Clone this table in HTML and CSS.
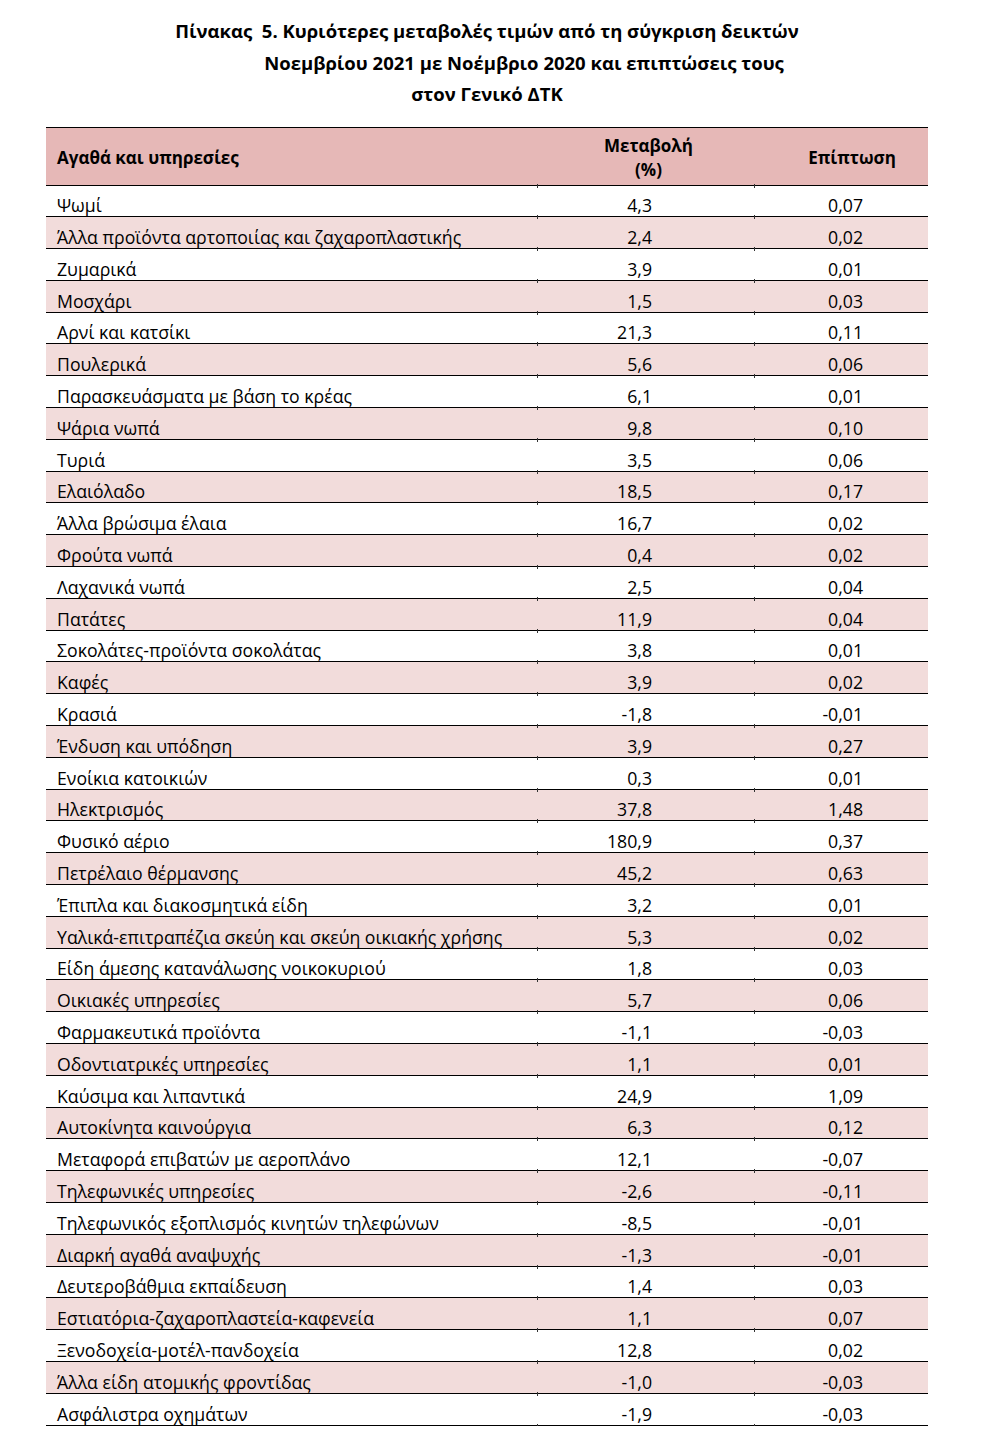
FILE: index.html
```html
<!DOCTYPE html>
<html lang="el">
<head>
<meta charset="utf-8">
<title>Πίνακας 5</title>
<link rel="stylesheet" href="styles.css">
</head>
<body>
<div class="page">
  <h1 class="title">
    <span class="tline">Πίνακας&nbsp; 5. Κυριότερες μεταβολές τιμών από τη σύγκριση δεικτών</span>
    <span class="tline shift">Νοεμβρίου 2021 με Νοέμβριο 2020 και επιπτώσεις τους</span>
    <span class="tline">στον Γενικό ΔΤΚ</span>
  </h1>
  <div class="table">
    <div class="row head">
      <div class="c name">Αγαθά και υπηρεσίες</div>
      <div class="c chg"><span>Μεταβολή</span><span>(%)</span></div>
      <div class="c imp">Επίπτωση</div>
    </div>
    <div class="row"><div class="c name">Ψωμί</div><div class="c v1">4,3</div><div class="c v2">0,07</div></div>
    <div class="row alt"><div class="c name">Άλλα προϊόντα αρτοποιίας και ζαχαροπλαστικής</div><div class="c v1">2,4</div><div class="c v2">0,02</div></div>
    <div class="row"><div class="c name">Ζυμαρικά</div><div class="c v1">3,9</div><div class="c v2">0,01</div></div>
    <div class="row alt"><div class="c name">Μοσχάρι</div><div class="c v1">1,5</div><div class="c v2">0,03</div></div>
    <div class="row"><div class="c name">Αρνί και κατσίκι</div><div class="c v1">21,3</div><div class="c v2">0,11</div></div>
    <div class="row alt"><div class="c name">Πουλερικά</div><div class="c v1">5,6</div><div class="c v2">0,06</div></div>
    <div class="row"><div class="c name">Παρασκευάσματα με βάση το κρέας</div><div class="c v1">6,1</div><div class="c v2">0,01</div></div>
    <div class="row alt"><div class="c name">Ψάρια νωπά</div><div class="c v1">9,8</div><div class="c v2">0,10</div></div>
    <div class="row"><div class="c name">Τυριά</div><div class="c v1">3,5</div><div class="c v2">0,06</div></div>
    <div class="row alt"><div class="c name">Ελαιόλαδο</div><div class="c v1">18,5</div><div class="c v2">0,17</div></div>
    <div class="row"><div class="c name">Άλλα βρώσιμα έλαια</div><div class="c v1">16,7</div><div class="c v2">0,02</div></div>
    <div class="row alt"><div class="c name">Φρούτα νωπά</div><div class="c v1">0,4</div><div class="c v2">0,02</div></div>
    <div class="row"><div class="c name">Λαχανικά νωπά</div><div class="c v1">2,5</div><div class="c v2">0,04</div></div>
    <div class="row alt"><div class="c name">Πατάτες</div><div class="c v1">11,9</div><div class="c v2">0,04</div></div>
    <div class="row"><div class="c name">Σοκολάτες-προϊόντα σοκολάτας</div><div class="c v1">3,8</div><div class="c v2">0,01</div></div>
    <div class="row alt"><div class="c name">Καφές</div><div class="c v1">3,9</div><div class="c v2">0,02</div></div>
    <div class="row"><div class="c name">Κρασιά</div><div class="c v1">-1,8</div><div class="c v2">-0,01</div></div>
    <div class="row alt"><div class="c name">Ένδυση και υπόδηση</div><div class="c v1">3,9</div><div class="c v2">0,27</div></div>
    <div class="row"><div class="c name">Ενοίκια κατοικιών</div><div class="c v1">0,3</div><div class="c v2">0,01</div></div>
    <div class="row alt"><div class="c name">Ηλεκτρισμός</div><div class="c v1">37,8</div><div class="c v2">1,48</div></div>
    <div class="row"><div class="c name">Φυσικό αέριο</div><div class="c v1">180,9</div><div class="c v2">0,37</div></div>
    <div class="row alt"><div class="c name">Πετρέλαιο θέρμανσης</div><div class="c v1">45,2</div><div class="c v2">0,63</div></div>
    <div class="row"><div class="c name">Έπιπλα και διακοσμητικά είδη</div><div class="c v1">3,2</div><div class="c v2">0,01</div></div>
    <div class="row alt"><div class="c name">Υαλικά-επιτραπέζια σκεύη και σκεύη οικιακής χρήσης</div><div class="c v1">5,3</div><div class="c v2">0,02</div></div>
    <div class="row"><div class="c name">Είδη άμεσης κατανάλωσης νοικοκυριού</div><div class="c v1">1,8</div><div class="c v2">0,03</div></div>
    <div class="row alt"><div class="c name">Οικιακές υπηρεσίες</div><div class="c v1">5,7</div><div class="c v2">0,06</div></div>
    <div class="row"><div class="c name">Φαρμακευτικά προϊόντα</div><div class="c v1">-1,1</div><div class="c v2">-0,03</div></div>
    <div class="row alt"><div class="c name">Οδοντιατρικές υπηρεσίες</div><div class="c v1">1,1</div><div class="c v2">0,01</div></div>
    <div class="row"><div class="c name">Καύσιμα και λιπαντικά</div><div class="c v1">24,9</div><div class="c v2">1,09</div></div>
    <div class="row alt"><div class="c name">Αυτοκίνητα καινούργια</div><div class="c v1">6,3</div><div class="c v2">0,12</div></div>
    <div class="row"><div class="c name">Μεταφορά επιβατών με αεροπλάνο</div><div class="c v1">12,1</div><div class="c v2">-0,07</div></div>
    <div class="row alt"><div class="c name">Τηλεφωνικές υπηρεσίες</div><div class="c v1">-2,6</div><div class="c v2">-0,11</div></div>
    <div class="row"><div class="c name">Τηλεφωνικός εξοπλισμός κινητών τηλεφώνων</div><div class="c v1">-8,5</div><div class="c v2">-0,01</div></div>
    <div class="row alt"><div class="c name">Διαρκή αγαθά αναψυχής</div><div class="c v1">-1,3</div><div class="c v2">-0,01</div></div>
    <div class="row"><div class="c name">Δευτεροβάθμια εκπαίδευση</div><div class="c v1">1,4</div><div class="c v2">0,03</div></div>
    <div class="row alt"><div class="c name">Εστιατόρια-ζαχαροπλαστεία-καφενεία</div><div class="c v1">1,1</div><div class="c v2">0,07</div></div>
    <div class="row"><div class="c name">Ξενοδοχεία-μοτέλ-πανδοχεία</div><div class="c v1">12,8</div><div class="c v2">0,02</div></div>
    <div class="row alt"><div class="c name">Άλλα είδη ατομικής φροντίδας</div><div class="c v1">-1,0</div><div class="c v2">-0,03</div></div>
    <div class="row"><div class="c name">Ασφάλιστρα οχημάτων</div><div class="c v1">-1,9</div><div class="c v2">-0,03</div></div>
  </div>
</div>
</body>
</html>
```
FILE: styles.css
```css
html, body {
  margin: 0;
  padding: 0;
  background: #ffffff;
}
body {
  font-family: "Open Sans", "Noto Sans", sans-serif;
  color: #000;
}
.page {
  width: 998px;
  padding-top: 15px;
}
.title {
  margin: 0 0 0 46px;
  width: 882px;
  font-size: 18.5px;
  font-weight: bold;
  line-height: 31.5px;
  text-align: center;
  display: flex;
  flex-direction: column;
  align-items: center;
}
.tline {
  display: block;
  white-space: nowrap;
}
.tline.shift {
  padding-left: 74px;
}
.table {
  margin-left: 46px;
  margin-top: 17px;
  width: 882px;
  border-top: 1px solid #000;
}
.row {
  display: grid;
  grid-template-columns: 491px 217px 174px;
  height: 31.8px;
  box-sizing: border-box;
  border-bottom: 1px solid #000;
  font-size: 17.7px;
  line-height: 22px;
  align-items: end;
}
.row.alt {
  background: #f2dcdb;
}
.row.head {
  background: #e6b8b7;
  height: 58px;
  font-weight: bold;
  font-size: 17px;
  align-items: stretch;
}
.c {
  position: relative;
  padding-bottom: 0;
  white-space: nowrap;
}
.head .c {
  display: flex;
  flex-direction: column;
  justify-content: center;
  padding-top: 3px;
}
.c.name {
  padding-left: 11px;
}
.c.chg {
  align-items: center;
  line-height: 24px;
  padding-left: 6px;
}
.c.imp {
  align-items: center;
  padding-left: 22px;
}
.c.v1 {
  text-align: right;
  padding-right: 102px;
}
.c.v2 {
  text-align: right;
  padding-right: 65px;
}
.c.v1::before,
.c.v2::before,
.c.chg::before,
.c.imp::before {
  content: "";
  position: absolute;
  left: 0;
  bottom: -3px;
  width: 1px;
  height: 4px;
  background: #333;
}
```
